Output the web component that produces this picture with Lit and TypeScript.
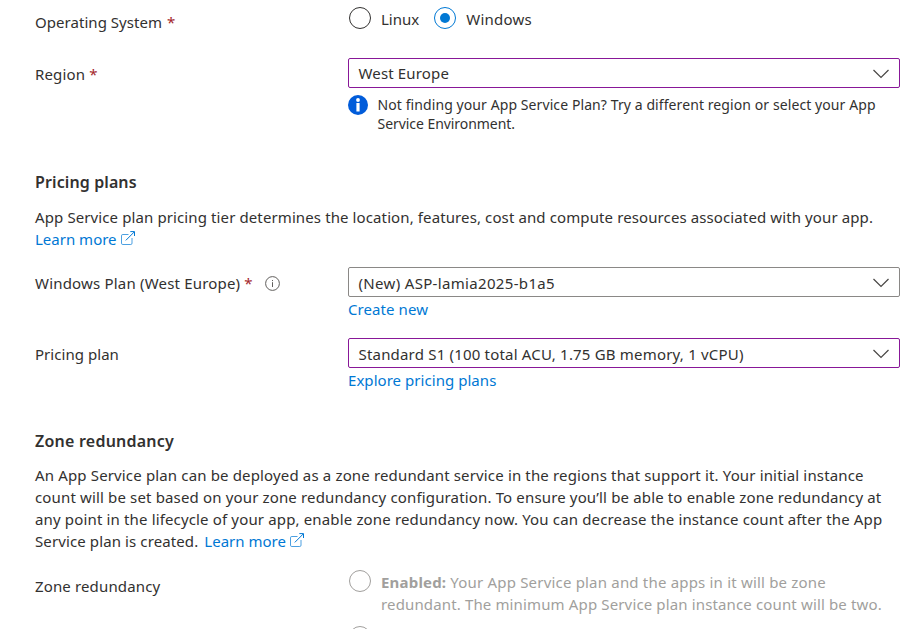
import { LitElement, html, css } from "lit";
import { customElement, property } from "lit/decorators.js";
import { classMap } from "lit/directives/class-map.js";

const externalIcon = html`<svg class="ext" width="15" height="15" viewBox="0 0 15 15" fill="none" stroke="#0078d4">
  <path d="M7.5 3.5H1.8Q.5 3.5 .5 4.8V12.2Q.5 13.5 1.8 13.5H9.7Q11 13.5 11 12.2V7" stroke-width="1" opacity=".7"/>
  <path d="M4.8 9.4L13.3 .9M9.3 .6H13.5V5" stroke-width="1"/>
</svg>`;

@customElement("radio-option")
class RadioOption extends LitElement {
  @property({ type: Boolean }) checked = false;
  @property({ type: Boolean }) disabled = false;

  static styles = css`
    :host { display: flex; align-items: flex-start; gap: 10px; }
    .dot {
      box-sizing: border-box; flex: none; width: 22px; height: 22px;
      border: 1px solid #323130; border-radius: 50%;
      display: flex; align-items: center; justify-content: center;
    }
    .checked { border-color: #0078d4; }
    .checked::after { content: ""; width: 10px; height: 10px; border-radius: 50%; background: #0078d4; }
    .disabled { border-color: #a19f9d; }
    .text { padding-top: 1px; white-space: nowrap; }
    .off { color: #a19f9d; }
  `;

  render() {
    return html`
      <span class=${classMap({ dot: true, checked: this.checked, disabled: this.disabled })}></span>
      <div class=${classMap({ text: true, off: this.disabled })}><slot></slot></div>
    `;
  }
}

@customElement("select-box")
class SelectBox extends LitElement {
  @property({ type: Boolean }) edited = false;

  static styles = css`
    :host { display: block; }
    .box {
      box-sizing: border-box; height: 30px; padding: 0 10px 0 9.5px;
      border: 1px solid #8a8886; border-radius: 2px;
      display: flex; align-items: center; justify-content: space-between;
      white-space: nowrap;
    }
    .edited { border-color: #881798; }
    .value { padding-top: var(--value-shift, 1px); }
    .chevron { margin-top: 2px; }
  `;

  render() {
    return html`<div class=${classMap({ box: true, edited: this.edited })}>
      <span class="value"><slot></slot></span>
      <svg class="chevron" width="16" height="10" viewBox="0 0 16 10" fill="none" stroke="#484644" stroke-width="1.2">
        <path d="M.5 1L8 8.5L15.5 1"/>
      </svg>
    </div>`;
  }
}

@customElement("app-root")
class AppRoot extends LitElement {
  static styles = css`
    :host {
      display: block; box-sizing: border-box; height: 629px; overflow: hidden;
      padding: 7px 16px 0 35px; background: #fff; color: #323130;
      font: 15px/22px "Noto Sans", "Open Sans", sans-serif; letter-spacing: .14px;
    }
    .row { display: grid; grid-template-columns: 313px 552px; align-items: start; }
    .label { display: flex; padding-top: 5px; white-space: nowrap; }
    .os { height: 51px; }
    .os .label { padding-top: 4px; }
    .region { height: 113px; --value-shift: 0; }
    .plan { height: 71px; }
    .tier { height: 92px; }
    .req { color: #a4262c; margin-left: 4px; }
    .os .req { margin-left: 5px; }
    .radios { display: flex; gap: 15px; margin-left: 1px; }
    .note {
      display: flex; gap: 9.5px; margin-top: 7px; white-space: nowrap;
      font-size: 14px; line-height: 19px; letter-spacing: .088px;
    }
    .note svg { flex: none; }
    h3 { margin: 0 0 13px; font-size: 16px; line-height: 22px; font-weight: 600; }
    .zone-title { margin-bottom: 12px; }
    p { margin: 0; white-space: nowrap; }
    .pricing { margin-bottom: 17px; }
    .zone { margin-bottom: 18px; }
    a { color: #0078d4; text-decoration: none; }
    .below { display: block; margin-top: 1px; }
    .ext { vertical-align: -1px; margin-left: 4px; }
    .after { margin-left: 2px; }
    .info { margin: 4px 0 0 12px; }
    .options { display: grid; gap: 11px; margin-left: 1px; }
    .first { min-height: 44px; }
    .t0 { letter-spacing: 0; }
    .t04 { letter-spacing: .045px; }
    .t09 { letter-spacing: .085px; }
    .t11 { letter-spacing: .11px; }
    .t15 { letter-spacing: .15px; }
    .t18 { letter-spacing: .19px; }
    .t20 { letter-spacing: .19px; }
    .t23 { letter-spacing: .23px; }
    .t35 { letter-spacing: .33px; }
    .tneg { letter-spacing: -.055px; }
  `;

  render() {
    return html`
      <div class="row os">
        <div class="label"><span class="t04">Operating System</span><span class="req">*</span></div>
        <div class="radios">
          <radio-option><span class="t0">Linux</span></radio-option>
          <radio-option checked><span class="t23">Windows</span></radio-option>
        </div>
      </div>
      <div class="row region">
        <div class="label"><span class="t15">Region</span><span class="req">*</span></div>
        <div>
          <select-box edited><span class="t15">West Europe</span></select-box>
          <div class="note">
            <svg width="20" height="20" viewBox="0 0 20 20">
              <circle cx="10" cy="10" r="10" fill="#015cda"/>
              <circle cx="10" cy="5" r="1.9" fill="#fff"/>
              <rect x="8.4" y="8" width="3.2" height="8.6" rx=".5" fill="#fff"/>
            </svg>
            <div>Not finding your App Service Plan? Try a different region or select your App<br><span class="tneg">Service Environment.</span></div>
          </div>
        </div>
      </div>
      <h3 class="t11">Pricing plans</h3>
      <p class="pricing"><span class="t11">App Service plan pricing tier determines the location, features, cost and compute resources associated with your app.</span><br><a href="#"><span class="t0">Learn more</span>${externalIcon}</a></p>
      <div class="row plan">
        <div class="label"><span class="t20">Windows Plan (West Europe)</span><span class="req">*</span>
          <svg class="info" width="15" height="15" viewBox="0 0 15 15" fill="none" stroke="#605e5c">
            <circle cx="7.5" cy="7.5" r="6.9"/>
            <path d="M7.5 6.2V11M7.5 4V5.1"/>
          </svg>
        </div>
        <div>
          <select-box><span class="t35">(New) ASP-lamia2025-b1a5</span></select-box>
          <a class="below t09" href="#">Create new</a>
        </div>
      </div>
      <div class="row tier">
        <div class="label t04">Pricing plan</div>
        <div>
          <select-box edited><span class="t20">Standard S1 (100 total ACU, 1.75 GB memory, 1 vCPU)</span></select-box>
          <a class="below t04" href="#">Explore pricing plans</a>
        </div>
      </div>
      <h3 class="zone-title t23">Zone redundancy</h3>
      <p class="zone t15">An App Service plan can be deployed as a zone redundant service in the regions that support it. Your initial instance<br>count will be set based on your zone redundancy configuration. To ensure you’ll be able to enable zone redundancy at<br>any point in the lifecycle of your app, enable zone redundancy now. You can decrease the instance count after the App<br><span class="t11">Service plan is created. </span> <a class="after" href="#"><span class="t0">Learn more</span>${externalIcon}</a></p>
      <div class="row zr">
        <div class="label">Zone redundancy</div>
        <div class="options">
          <radio-option class="first" disabled><b class="t18">Enabled:</b><span class="t18"> Your App Service plan and the apps in it will be zone</span><br>redundant. The minimum App Service plan instance count will be two.</radio-option>
          <radio-option disabled></radio-option>
        </div>
      </div>
    `;
  }
}
